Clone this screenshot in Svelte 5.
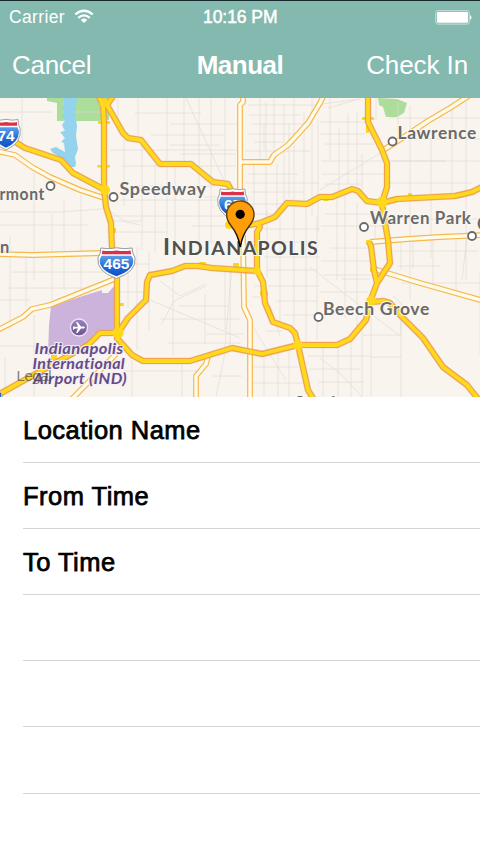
<script>
  const rows = ['Location Name', 'From Time', 'To Time', '', '', '', ''];

  const secondary = [
    'M-4 151L15 155L32 167L50 177L80 190L104 198',
    'M243 95V102L240 105V200',
    'M241 162H270L274 155L288 145L308 123L320 103L324 95',
    'M470 95L450 108L428 121L410 133L382 151',
    'M370 242L408 239L440 237L484 235',
    'M374 269L420 283L484 301',
    'M-4 254L33 255L67 254L104 253',
    'M-4 331L23 317L32 309L50 305L117 278',
    'M71 400L116 354',
    'M243 235L244 307L250 320V400',
    'M208 356L206 364L196 376V400'
  ];

  const highways = [
    'M10 138L17 143L25 148L61 160L73 173L105 190',
    'M98 95L103 105L104 122V187L106 207L111 223L112 248L117 278V340',
    'M114 95L107 105L123 133L128 138L141 140L160 164H191L213 182L228 184L231 190V224',
    'M229 225H250L260 223L275 217L287 203L307 204L320 197H332L352 189L358 191L367 201L382 203L397 199L455 196L472 192L484 186',
    'M257 223L260 227L257 232V270L263 282L265 303L273 322L290 328L295 333L298 345L308 390L314 400',
    'M257 271L212 268L198 266L185 266L172 271L150 275L147 282L146 300L128 318L118 333',
    'M118 333H100L88 345L57 362L-4 396',
    'M117 338L132 355L143 361H190L232 348L262 354L298 345H337L350 339L366 320L370 302L377 283L390 263L388 240L385 223L382 203L387 187V163L382 150L368 122V95',
    'M369 242L371 246L374 270L377 283',
    'M370 302L384 301L390 303L400 315L423 338L443 367L467 385L479 400'
  ];

  const streets = [
    'M0 112H52M0 212H60L102 209M22 98V146M34 172V280M52 214V300M64 199V290M81 194V292M0 225H88M12 272H110M8 288H96M0 300H30M10 236V330M26 255V306M34 315V397M0 346H42M5 358V392',
    'M63 112H104M64 98V146M74 112V160M118 98V130M138 98V138M110 150H240M122 166H236M111 216H240M106 232H166M120 200H238M124 140V206M142 145V250M155 164V252M167 98V252M175 166V246M184 98V163M199 98V246M211 98V244M225 98V180M135 113H201M170 124H237M151 135H225M170 145H220M180 154H236M204 197H228M192 226H229M136 186H215',
    'M186 98L226 185M105 208L126 222L140 225M111 221H142M121 264H150M119 292H145M149 252V330M137 247V350M128 256V308M160 281L180 296L206 284M161 325L174 301L206 286M205 294V343M225 266V330M232 266L224 358L216 397M230 272V352M160 319H240M206 334H244M179 306H228M173 275V355M150 300L240 338M168 343H241M124 371H203M213 376H242M132 360V397M182 363V397',
    'M248 105H316M249 115H301M252 124H310M247 134H299M254 142H284M245 151H310M248 174H298M246 183H319M251 192H303M247 204H284M260 98V160M266 102V220M274 98V154M284 104V212M294 98V205M304 112V204M312 98V215M254 163V220M277 164V215M251 214H276M264 124V150M289 123V198M318 119V233',
    'M320 122H369M320 134H365M328 108L356 100M325 144H374M321 161H446M322 174H386M324 184H362M330 98V160M339 128V193M348 113V184M357 112V194M362 154V197M376 98V120M389 118H480M398 102V132M410 106V300M431 138V258M452 106V196M466 98V280M389 139H480M391 161H480M390 183H472M393 219H480M393 251H478M375 223V238',
    'M320 190L382 152M322 104L360 99M325 214H381M321 226H382M337 198V280M345 190V318M357 202V328M330 248H369M321 261H371M323 275H373M320 292H368M267 210V278M280 211V322M294 204V326M306 206V342M317 217V340M264 229H320M262 242H319M264 257H320M266 270H318M268 286H319M276 301H318M283 315H319',
    'M310 267L400 336M270 305L280 336M250 322L286 380M254 286H265M252 297H267M266 331H283M252 367H298M252 383H306M264 355V397M278 350V397M289 348V397M323 346V397M338 346V397M351 339V397M362 324V396M371 310V397M308 356H370M309 369H360M318 382H363M320 358L341 374L362 397M371 357H402M363 335H401M401 319V397',
    'M397 266H440M401 242V270M413 240V269M433 238V286M456 237V297M480 271V355M393 296L401 303V334M370 279H342M401 283H480M467 237L462 280'
  ];

  const ramps = [
    [97, 165, 13, 2.5], [98, 121, 12, 3], [111, 228, 5, 5], [362, 117, 12, 3], [323, 194, 6, 7],
    [408, 193, 4, 6], [199, 262, 7, 3], [233, 263, 6, 4], [260, 291, 8, 5], [366, 240, 5, 4], [370, 267, 4, 5],
    [366, 124, 3, 9], [119, 303, 5, 3], [51, 354, 6, 8]
  ];
  const junctions = [[104, 103, 4.5], [105, 190, 5], [118, 333, 5.5], [382, 202, 5.5], [371, 301, 5], [298, 345, 5], [257, 271, 3.8], [229, 225, 4]];
  const towns = [[50.5, 186], [113.5, 197], [392.5, 141.5], [364, 227], [472, 236], [318.5, 317]];
</script>

{#snippet shield(x, y, w, label, size)}
  <svg {x} {y} width={w} height="33" viewBox={`0 0 ${w} 33`} overflow="visible">
    <g transform={`scale(${w / 40} 1)`}>
      <path class="plate" d="M4 .5Q12 2 20 .3Q28 2 36 .5Q36 6 39 10Q41 24 20 31Q-1 24 1 10Q4 6 4 .5Z" />
      <path fill="#dc3049" d="M5.500 3Q12 4.200 20 3Q28 4.200 34.500 3L35 6.700H5Z" />
      <path fill="url(#blue)" d="M4.700 8.200H35.300L37 11.500Q39 22 20 28.800Q1 22 3 11.500Z" />
    </g>
    <text class="num" x={w / 2} y="21.500" font-size={size} text-anchor="middle">{label}</text>
  </svg>
{/snippet}

<main>
  <header>
    <div class="status">
      <span class="carrier">Carrier</span>
      <svg class="wifi" width="20" height="15" viewBox="0 0 20 15">
        <path d="M1.300 5.500Q10-2 18.700 5.500M4.200 8.800Q10 3.900 15.800 8.800" />
        <path class="dot" d="M6.800 11Q10 8.200 13.200 11L10 14Z" />
      </svg>
      <time>10:16 PM</time>
      <svg class="battery" width="38" height="15" viewBox="0 0 38 15">
        <rect class="shell" x=".7" y=".7" width="33.600" height="13.400" rx="2" />
        <rect x="2" y="2" width="31" height="10.800" rx="1" />
        <path d="M35 5Q38 7.400 35 10Z" />
      </svg>
    </div>
    <nav>
      <button class="cancel">Cancel</button>
      <h1>Manual</h1>
      <button class="check">Check In</button>
    </nav>
  </header>

  <svg class="map" width="480" height="299" viewBox="0 98 480 299">
    <defs>
      <linearGradient id="blue" x2="0" y2="1"><stop stop-color="#5c9ee8" /><stop offset=".6" stop-color="#1d66d4" /><stop offset="1" stop-color="#1451c2" /></linearGradient>
      <linearGradient id="plane" x2="0" y2="1"><stop stop-color="#9a88bd" /><stop offset="1" stop-color="#68518f" /></linearGradient>
      <linearGradient id="edge" x2="0" y2="1"><stop stop-color="#7b4a06" /><stop offset=".6" stop-color="#3e2b0c" /><stop offset=".85" stop-color="#000" /></linearGradient>
    </defs>
    <rect y="98" width="480" height="299" fill="#f9f5ee" />
    <path class="park" d="M47 98H109V120L98 121H57V103L47 101Z" />
    <path class="park" d="M378 98L397 99L407 103L404 113L397 117L386 117L383 107L379 105Z" />
    {#each streets as d}<path class="street" {d} />{/each}
    <path fill="#94d3ed" d="M63 98H77L75 113L77 126L76 136L78 149L75 157L76 164L75 167L68 167L65 160L53 153L50 149L56 147L65 152L64 143L61 142L65 138L60 132L65 131L62 125L65 121L62 117L64 111L61 109L64 105Z" />
    <path fill="#ccb3dc" d="M51 306L102 290V293H108L115 285V332H100L88 345L70 355H48L49 325Z" />
    {#each secondary as d}<path class="minor-edge" {d} />{/each}
    {#each secondary as d}<path class="minor" {d} />{/each}
    {#each ramps as [x, y, width, height]}<rect {x} {y} {width} {height} rx="1" fill="#ffd414" />{/each}
    <g class="shade">{#each highways as d}<path {d} />{/each}</g>
    {#each highways as d}<path class="major-edge" {d} />{/each}
    {#each junctions as [cx, cy, r]}<circle {cx} {cy} {r} fill="#ffd51c" />{/each}
    {#each highways as d}<path class="major" {d} />{/each}

    {@render shield(-9, 119, 30, '74', 15.5)}
    {@render shield(97, 247.500, 39, '465', 15.5)}
    {@render shield(217, 188.500, 31, '65', 15.5)}
    <g transform="translate(-9 391)"><path class="plate" d="M0 0H8Q12 3 11 8H0Z" /><path fill="#2369cc" d="M0 2H10V8H0Z" /></g>

    {#each towns as [cx, cy]}<circle class="town" {cx} {cy} r="4" />{/each}
    <g class="place">
      <text x="-25" y="199.500" textLength="70" lengthAdjust="spacingAndGlyphs">Clermont</text>
      <text x="119.500" y="194.500" textLength="87" lengthAdjust="spacingAndGlyphs">Speedway</text>
      <text x="397.500" y="139" textLength="79.500" lengthAdjust="spacingAndGlyphs">Lawrence</text>
      <text x="370" y="224" textLength="101.500" lengthAdjust="spacingAndGlyphs">Warren Park</text>
      <text x="323" y="314.500" textLength="107" lengthAdjust="spacingAndGlyphs">Beech Grove</text>
      <text x="0" y="253">n</text>
      <text x="477" y="230">C</text>
      <text x="295" y="409">Southport</text>
    </g>
    <text class="city" x="163" y="255" textLength="156" lengthAdjust="spacingAndGlyphs"><tspan font-size="22.500">I</tspan>NDIANAPOLIS</text>

    <circle cx="79" cy="327.500" r="8.500" fill="url(#plane)" stroke="#eee4f6" stroke-width="1.300" />
    <path fill="#fff" d="M73 326.500L75 326.800H78L76 322H77.500L81 326.600H84Q86 327.500 84 328.400H81L77.500 333H76L78 328.400H75L73 330Z" />
    <g class="airport">
      <text x="34.500" y="354" textLength="89" lengthAdjust="spacingAndGlyphs">Indianapolis</text>
      <text x="32.500" y="368.500" textLength="92.500" lengthAdjust="spacingAndGlyphs">International</text>
      <text x="33" y="383.500" textLength="94" lengthAdjust="spacingAndGlyphs">Airport (IND)</text>
    </g>
    <text class="legal" x="16.500" y="380.500" textLength="35">Legal</text>
    <path class="pin" d="M240 246.500Q238.500 235 230.500 225Q226.600 219.500 226.600 214.700A13.700 13.700 0 0 1 254 214.700Q254 219.500 250 225Q242 235 240.500 246.500Z" />
    <circle cx="240.200" cy="214.300" r="4.600" />
  </svg>

  <ul>
    {#each rows as label}<li>{label}</li>{/each}
  </ul>
</main>

<style>
  :global(body) { margin: 0; background: #fff; }
  main { width: 480px; height: 854px; overflow: hidden; background: #fff; font-family: "Liberation Sans", sans-serif; }
  header { box-sizing: border-box; height: 98px; background: #84b9b0; border-top: 1px solid #152a29; color: #fff; }
  .status { display: grid; grid-template-columns: 65px 138px 1fr auto; align-items: center; height: 32px; padding: 0 7px 0 9px; font-size: 17.5px; }
  .carrier { letter-spacing: .35px; white-space: nowrap; }
  .wifi { margin-bottom: 1px; }
  .wifi path { fill: none; stroke: #fff; stroke-width: 2.3; }
  .wifi .dot { fill: #fff; stroke: none; }
  time { margin-left: -9px; -webkit-text-stroke: .5px #fff; letter-spacing: -.05px; }
  .battery { fill: #fff; }
  .battery .shell { fill: none; stroke: #c8e1dc; }
  nav { display: grid; grid-template-columns: 1fr auto 1fr; align-items: center; height: 64px; padding: 0 12px; }
  button { padding: 0; border: 0; background: none; color: inherit; font: 26px "Liberation Sans", sans-serif; }
  .cancel { justify-self: start; letter-spacing: -.3px; }
  .check { justify-self: end; letter-spacing: -.1px; }
  h1 { margin: 0; font-size: 26px; font-weight: 700; letter-spacing: -.5px; }
  .map { display: block; }
  .park { fill: #addd9a; }
  path { stroke-linejoin: round; }
  .street { fill: none; stroke: #dedad3; stroke-width: .65; }
  .minor-edge { fill: none; stroke: #f5b94e; stroke-width: 5.8; }
  .minor { fill: none; stroke: #fffaea; stroke-width: 3.4; }
  .shade { fill: none; stroke: #b8a99c; stroke-width: 7; opacity: .3; }
  .major-edge { fill: none; stroke: #f0a04c; stroke-width: 6; }
  .major { fill: none; stroke: #ffd91a; stroke-width: 3.8; }
  .plate { fill: #fff; stroke: #92979c; stroke-width: 1; }
  .num { fill: #fff; font-family: "Liberation Sans", sans-serif; font-weight: 700; }
  .town { fill: #fff; stroke: #6b6b6b; stroke-width: 1.8; }
  .place text { fill: #6a6a6a; stroke: #faf7f1; stroke-width: 2px; paint-order: stroke; font: 700 16.5px Lato, sans-serif; letter-spacing: .6px; }
  .city { fill: #505050; stroke: #faf7f1; stroke-width: 2px; paint-order: stroke; font: 700 18.5px Lato, sans-serif; letter-spacing: 1.3px; }
  .airport text { fill: #654b88; stroke: #f4eef5; stroke-width: 2px; paint-order: stroke; font: italic 700 15px Lato, sans-serif; letter-spacing: .3px; font-variant-ligatures: none; }
  .legal { fill: #444; opacity: .65; font: 15px "Liberation Sans", sans-serif; }
  .pin { fill: #ff9d0b; stroke: url(#edge); stroke-width: 1.4; }
  ul { margin: 0; padding: 0 0 0 23px; list-style: none; }
  li { box-sizing: border-box; height: 66.1px; border-bottom: 1px solid #d5d5d5; color: #000; font-size: 25.5px; letter-spacing: .48px; line-height: 67px; -webkit-text-stroke: .75px #000; }
</style>
